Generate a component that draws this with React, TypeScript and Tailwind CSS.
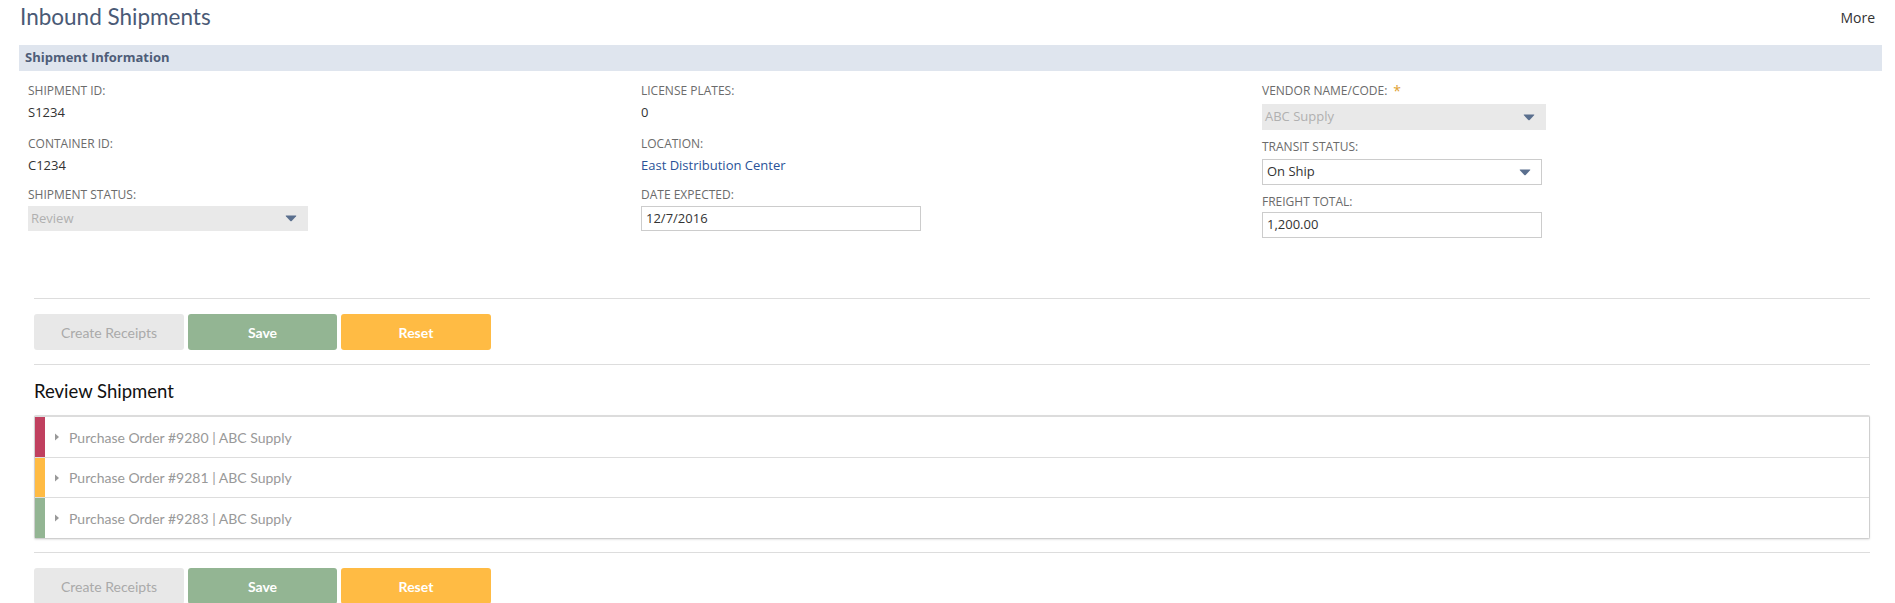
import React from "react";

const Caret = () => (
  <svg width="12" height="7" viewBox="0 0 12 7" className="shrink-0">
    <path d="M1.2 0.5 H10.8 Q11.8 0.5 11.1 1.3 L6.7 5.9 Q6 6.6 5.3 5.9 L0.9 1.3 Q0.2 0.5 1.2 0.5 Z" fill="#5a6f8e" />
  </svg>
);

const Label = ({ children }: { children: React.ReactNode }) => (
  <div className="text-[12px] leading-[16px] text-[#6b6b6b] uppercase">{children}</div>
);

const Value = ({ children, blue }: { children: React.ReactNode; blue?: boolean }) => (
  <div className={`text-[13px] leading-[18px] mt-[4px] ${blue ? "text-[#2a5298]" : "text-[#333]"}`}>{children}</div>
);

const Buttons = () => (
  <div className="flex gap-[4px] font-['Lato'] text-[14px]">
    <button className="w-[150px] h-[36px] rounded-[3px] bg-[#e8e8e8] text-[#aaaaaa]">Create Receipts</button>
    <button className="w-[149px] h-[36px] rounded-[3px] bg-[#93b593] text-white font-bold">Save</button>
    <button className="w-[150px] h-[36px] rounded-[3px] bg-[#ffbb44] text-white font-bold">Reset</button>
  </div>
);

const rows = [
  { color: "bg-[#c0405f]", text: "Purchase Order #9280 | ABC Supply" },
  { color: "bg-[#ffbb44]", text: "Purchase Order #9281 | ABC Supply" },
  { color: "bg-[#93b593]", text: "Purchase Order #9283 | ABC Supply" },
];

export default function App() {
  return (
    <div className="w-[1895px] h-[603px] overflow-hidden bg-white font-['Open_Sans',sans-serif]">
      <div className="flex justify-between items-start h-[45px] pl-[20px] pr-[20px]">
        <div className="font-['Lato'] text-[22.5px] leading-[28px] pt-[3px] text-[#4a5a76]">Inbound Shipments</div>
        <div className="text-[14px] leading-[20px] pt-[8px] text-[#333]">More</div>
      </div>
      <div className="ml-[19px] mr-[13px] h-[26px] bg-[#dfe5ee] flex items-center pl-[6px]">
        <span className="text-[13px] font-bold text-[#4e5d78]">Shipment Information</span>
      </div>
      <div className="grid grid-cols-[613px_621px_1fr] pl-[28px] pt-[12px] h-[227px]">
        <div className="flex flex-col">
          <div>
            <Label>Shipment ID:</Label>
            <Value>S1234</Value>
          </div>
          <div className="mt-[15px]">
            <Label>Container ID:</Label>
            <Value>C1234</Value>
          </div>
          <div className="mt-[13px]">
            <Label>Shipment Status:</Label>
            <div className="mt-[3px] w-[280px] h-[25px] bg-[#e9e9e9] flex items-center justify-between pl-[3px] pr-[11px]">
              <span className="text-[13px] text-[#b0b0b0]">Review</span>
              <Caret />
            </div>
          </div>
        </div>
        <div className="flex flex-col">
          <div>
            <Label>License Plates:</Label>
            <Value>0</Value>
          </div>
          <div className="mt-[15px]">
            <Label>Location:</Label>
            <Value blue>East Distribution Center</Value>
          </div>
          <div className="mt-[13px]">
            <Label>Date Expected:</Label>
            <div className="mt-[3px] w-[280px] h-[25px] border border-[#cccccc] flex items-center pl-[4px]">
              <span className="text-[13px] text-[#333]">12/7/2016</span>
            </div>
          </div>
        </div>
        <div className="flex flex-col">
          <div>
            <div className="flex items-center gap-[6px]">
              <Label>Vendor Name/Code:</Label>
              <span className="text-[14px] leading-[16px] text-[#e0a030]">*</span>
            </div>
            <div className="mt-[5px] w-[284px] h-[26px] bg-[#e9e9e9] flex items-center justify-between pl-[3px] pr-[11px]">
              <span className="text-[13px] text-[#b0b0b0]">ABC Supply</span>
              <Caret />
            </div>
          </div>
          <div className="mt-[9px]">
            <Label>Transit Status:</Label>
            <div className="mt-[4px] w-[280px] h-[26px] border border-[#cccccc] flex items-center justify-between pl-[4px] pr-[10px]">
              <span className="text-[13px] text-[#333]">On Ship</span>
              <Caret />
            </div>
          </div>
          <div className="mt-[9px]">
            <Label>Freight Total:</Label>
            <div className="mt-[2px] w-[280px] h-[26px] border border-[#cccccc] flex items-center pl-[4px]">
              <span className="text-[13px] text-[#333]">1,200.00</span>
            </div>
          </div>
        </div>
      </div>
      <div className="ml-[34px] mr-[25px]">
        <div className="h-px bg-[#dddddd]" />
        <div className="pt-[15px] pb-[14px]">
          <Buttons />
        </div>
        <div className="h-px bg-[#dddddd]" />
        <div className="font-['Lato'] text-[18.5px] leading-[24px] text-[#111] pt-[14px] pb-[12px]">Review Shipment</div>
        <div className="border border-[#cfcfcf] border-t-[2px] border-t-[#dcdcdc] rounded-[2px] shadow-[0_1px_2px_rgba(0,0,0,0.1)]">
          {rows.map((r, i) => (
            <div key={i} className={`flex ${i === 2 ? "h-[41px]" : "h-[40px]"} ${i > 0 ? "border-t border-[#dddddd]" : ""}`}>
              <div className={`w-[10px] ${r.color}`} />
              <div className="flex items-center pl-[9px] gap-[9px]">
                <svg width="6" height="8" viewBox="0 0 6 8"><path d="M1 0.5 L5 4 L1 7.5 Z" fill="#999" /></svg>
                <span className="font-['Lato'] text-[14px] text-[#999999]">{r.text}</span>
              </div>
            </div>
          ))}
        </div>
        <div className="h-px bg-[#dddddd] mt-[13px]" />
        <div className="pt-[15px]">
          <Buttons />
        </div>
      </div>
    </div>
  );
}
